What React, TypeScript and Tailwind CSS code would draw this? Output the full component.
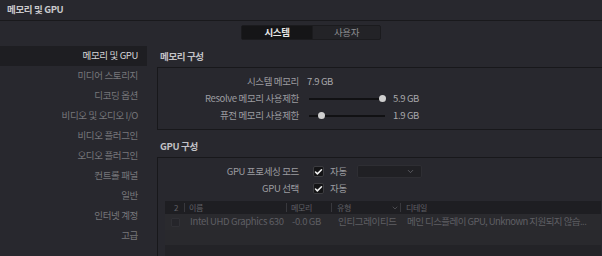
import { Check, ChevronDown } from "lucide-react";

const menu = [
  "메모리 및 GPU",
  "미디어 스토리지",
  "디코딩 옵션",
  "비디오 및 오디오 I/O",
  "비디오 플러그인",
  "오디오 플러그인",
  "컨트롤 패널",
  "일반",
  "인터넷 계정",
  "고급",
];

const Box = ({ on }: { on?: boolean }) => (
  <div className="w-[11px] h-[11px] rounded-[2px] bg-[#141416] border border-[#3c3c40] flex items-center justify-center">
    {on && <Check size={10} strokeWidth={4} color="#f2f2f2" />}
  </div>
);

const Slider = ({ pos }: { pos: number }) => (
  <div className="relative w-[76px] h-[7px] flex items-center">
    <div className="w-full h-[2px] bg-[#111113]" />
    <div
      className="absolute w-[7px] h-[7px] rounded-full bg-[#cfcfcf]"
      style={{ left: pos }}
    />
  </div>
);

const Row = ({ label, children }: { label: string; children: React.ReactNode }) => (
  <div className="flex items-center h-[17px]">
    <div className="w-[141px] text-right text-[#9c9ca0]">{label}</div>
    <div className="ml-[8px] flex items-center gap-[8px] text-[#a8a8ac]">{children}</div>
  </div>
);

const App = () => {
  return (
    <div className="w-[602px] h-[256px] overflow-hidden bg-[#28282e] text-[9.5px] tracking-[-0.35px] leading-none font-['Noto_Sans_CJK_KR',sans-serif]">
      <div className="h-[21px] border-b border-[#19191c] px-[7px] flex items-center font-bold text-[#c9c9cc]">
        메모리 및 GPU
      </div>

      <div className="flex pl-[241px] mt-[4px]">
        <div className="flex h-[15px] rounded-[2px] border border-[#1b1b1e] bg-[#232327]">
          <div className="w-[70px] flex items-center justify-center bg-[#151517] text-[#e6e6e6] font-bold">
            시스템
          </div>
          <div className="w-[68px] flex items-center justify-center border-l border-[#1b1b1e] text-[#8c8c90]">
            사용자
          </div>
        </div>
      </div>

      <div className="flex mt-[6px]">
        <div className="w-[147px] shrink-0">
          {menu.map((m, i) => (
            <div
              key={m}
              className={
                i === 0
                  ? "h-[20px] flex items-center justify-end pr-[9px] bg-[#1e1e22] text-[#d6d6d8]"
                  : "h-[20px] flex items-center justify-end pr-[9px] text-[#77777b]"
              }
            >
              {m}
            </div>
          ))}
        </div>

        <div className="pl-[10px] shrink-0">
          <div className="h-[21px] flex items-center pl-[3px] font-semibold text-[#c2c2c6]">메모리 구성</div>
          <div className="w-[452px] border border-[#18181b] pt-[5px] pb-[5px]">
            <Row label="시스템 메모리">
              <span>7.9 GB</span>
            </Row>
            <Row label="Resolve 메모리 사용제한">
              <div className="ml-[2px]">
                <Slider pos={70} />
              </div>
              <span>5.9 GB</span>
            </Row>
            <Row label="퓨전 메모리 사용제한">
              <div className="ml-[2px]">
                <Slider pos={9} />
              </div>
              <span>1.9 GB</span>
            </Row>
          </div>

          <div className="mt-[6px] h-[21px] flex items-center pl-[3px] font-semibold text-[#c2c2c6]">GPU 구성</div>
          <div className="w-[452px] h-[120px] border border-[#18181b] pt-[5px]">
            <Row label="GPU 프로세싱 모드">
              <div className="ml-[6px] flex items-center gap-[6px]">
                <Box on />
                <span className="text-[#9c9ca0]">자동</span>
                <div className="ml-[4px] w-[65px] h-[13px] rounded-[2px] bg-[#202024] border border-[#2e2e33] flex items-center justify-end pr-[6px]">
                  <ChevronDown size={9} color="#6a6a70" strokeWidth={2} />
                </div>
              </div>
            </Row>
            <Row label="GPU 선택">
              <div className="ml-[6px] flex items-center gap-[6px]">
                <Box on />
                <span className="text-[#9c9ca0]">자동</span>
              </div>
            </Row>

            <div className="ml-[7px] mt-[4px] w-[436px] bg-[#232327] h-[60px] text-[#5f5f64]">
              <div className="flex h-[13px] bg-[#1e1e22] text-[8px] text-[#606066]">
                <div className="w-[20px] flex items-center justify-end pr-[6px] border-r border-[#38383d] my-[2px]">2</div>
                <div className="w-[102px] flex items-center pl-[4px] border-r border-[#38383d] my-[2px]">이름</div>
                <div className="w-[45px] flex items-center pl-[4px] border-r border-[#38383d] my-[2px]">메모리</div>
                <div className="w-[69px] flex items-center justify-between pl-[5px] pr-[1px] border-r border-[#38383d] my-[2px]">
                  <span>유형</span>
                  <ChevronDown size={8} color="#606066" strokeWidth={2} />
                </div>
                <div className="flex-1 flex items-center pl-[5px]">디테일</div>
              </div>
              <div className="flex h-[16px] items-center bg-[#2a2a2e]">
                <div className="w-[20px] flex justify-center">
                  <div className="w-[9px] h-[9px] rounded-[1px] bg-[#25252a] border border-[#303035]" />
                </div>
                <div className="w-[102px] pl-[5px] whitespace-nowrap">Intel UHD Graphics 630</div>
                <div className="w-[45px] pl-[5px] whitespace-nowrap">-0.0 GB</div>
                <div className="w-[69px] pl-[6px] whitespace-nowrap">인티그레이티드</div>
                <div className="flex-1 pl-[6px] pr-[2px] whitespace-nowrap tracking-[-0.55px]">메인 디스플레이 GPU, Unknown 지원되지 않습...</div>
              </div>
              <div className="h-[15px] bg-[#29292d]" />
            </div>
          </div>
        </div>
      </div>
    </div>
  );
};

export default App;
